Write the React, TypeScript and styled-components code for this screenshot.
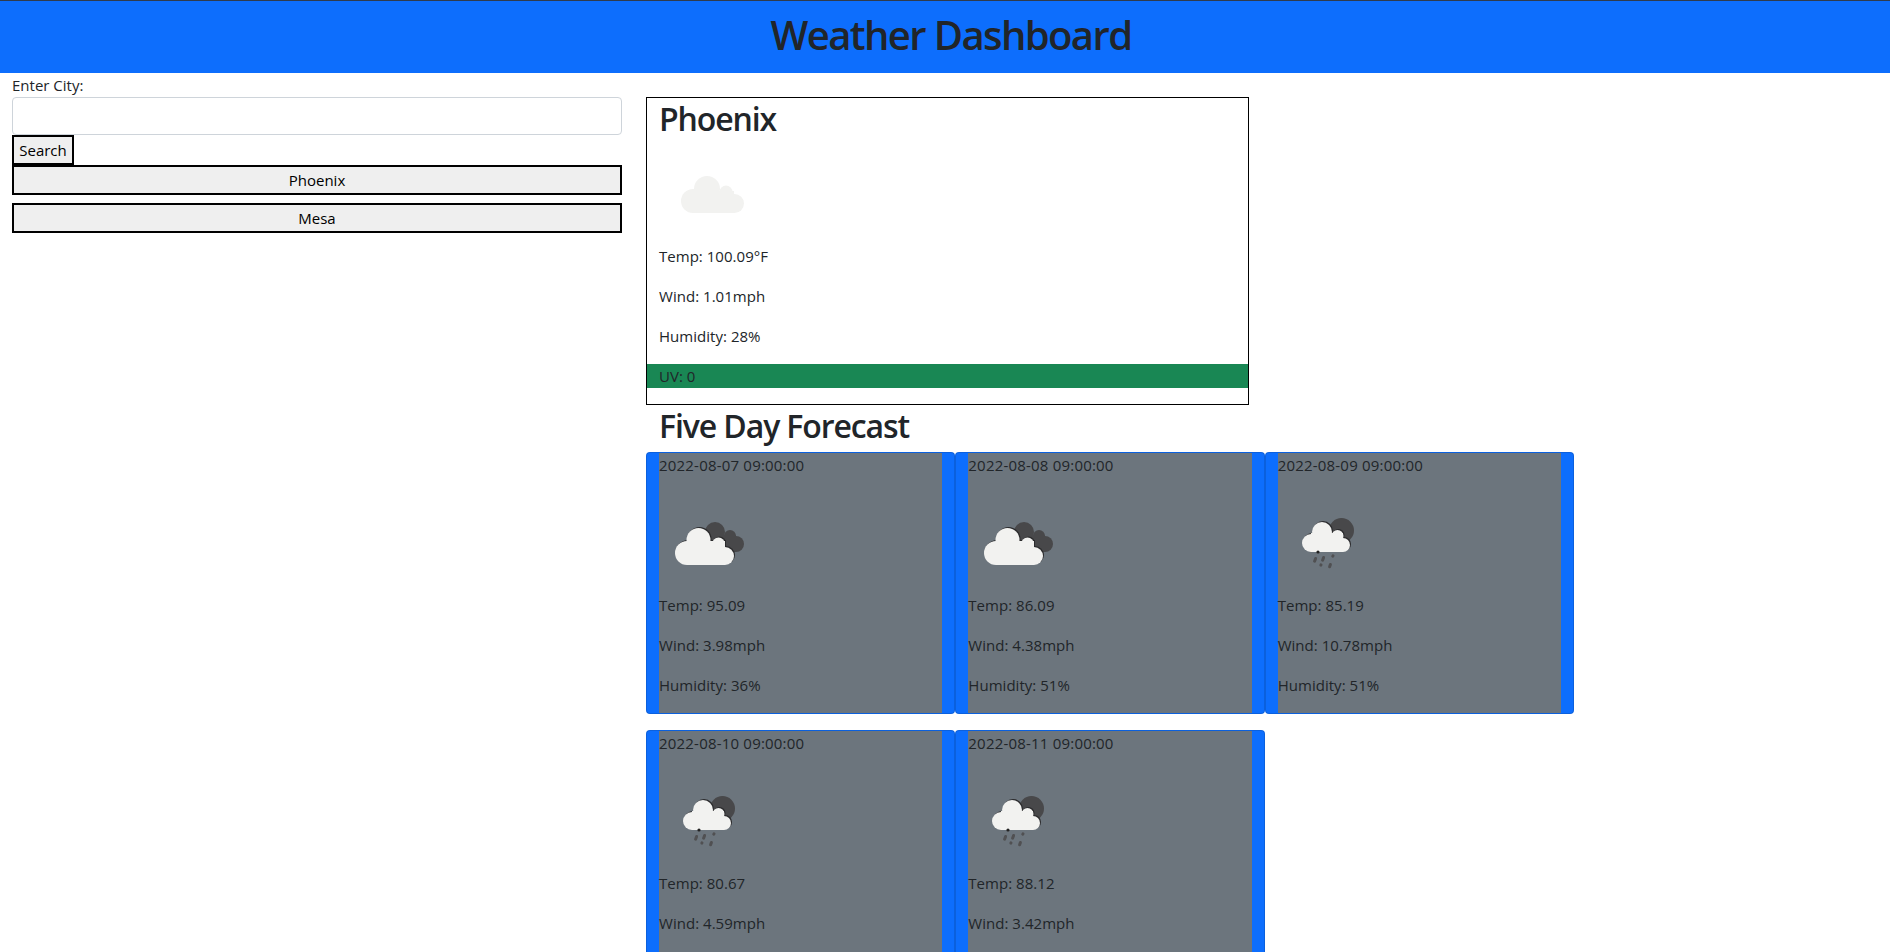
import React from 'react';
import styled, { createGlobalStyle } from 'styled-components';

const GlobalStyle = createGlobalStyle`
  html, body {
    margin: 0;
    height: 100%;
    overflow: hidden;
    background: #fff;
  }
  body {
    font-family: "Open Sans", "Noto Sans", sans-serif;
    font-size: 16px;
    line-height: 24px;
    color: #212529;
  }
  * {
    box-sizing: border-box;
  }
`;

const Page = styled.div`
  height: 952px;
  overflow: hidden;
`;

const Header = styled.header`
  height: 73px;
  background: #0d6efd;
  border-top: 1px solid #2f3b4c;
  padding: 0 0 5px 12px;
  display: flex;
  justify-content: center;
  align-items: center;
`;

const Title = styled.h1`
  margin: 0;
  font-size: 40px;
  line-height: 48px;
  font-weight: 600;
  letter-spacing: -1.6px;
`;

const Main = styled.main`
  display: flex;
  align-items: flex-start;
`;

const Sidebar = styled.aside`
  width: 634px;
  flex: none;
  padding: 0 12px;
`;

const Label = styled.label`
  display: block;
  font-size: 15px;
`;

const CityInput = styled.input`
  display: block;
  width: 100%;
  height: 38px;
  border: 1px solid #ced4da;
  border-radius: 4px;
  background: #fff;
`;

const PlainButton = styled.button<{ $wide?: boolean }>`
  display: block;
  width: ${({ $wide }) => ($wide ? '100%' : '62px')};
  height: 30px;
  padding: 1px 0;
  border: 2px solid #000;
  background: #efefef;
  color: #000;
  font-family: inherit;
  font-size: 15px;
  line-height: 24px;
  margin-bottom: ${({ $wide }) => ($wide ? '8px' : '0')};
`;

const Content = styled.section`
  width: 952px;
  flex: none;
  padding: 24px 12px 0;
`;

const CurrentBox = styled.div`
  width: 603px;
  height: 308px;
  border: 1px solid #000;
`;

const CityName = styled.h2`
  margin: 0;
  padding: 2px 12px 0;
  height: 38.4px;
  font-size: 32px;
  line-height: 38.4px;
  font-weight: 600;
  letter-spacing: -1.1px;
`;

const CurrentIcon = styled.svg`
  display: block;
  width: 100px;
  height: 100px;
  margin: 0 12px 8px;
`;

const CurrentLine = styled.p<{ $uv?: boolean }>`
  margin: 0 0 16px;
  padding: 0 12px;
  font-size: 15px;
  letter-spacing: ${({ $uv }) => ($uv ? '0' : '0.03px')};
  background: ${({ $uv }) => ($uv ? '#198754' : 'transparent')};
`;

const ForecastTitle = styled.h2`
  margin: 0;
  padding: 2px 13px 6.6px;
  font-size: 32px;
  line-height: 38.4px;
  font-weight: 600;
  letter-spacing: -1.1px;
`;

const ForecastGrid = styled.div`
  display: grid;
  grid-template-columns: repeat(3, 309.33px);
  row-gap: 16px;
`;

const Card = styled.article`
  height: 262px;
  background: #0d6efd;
  border: 1px solid rgba(0, 0, 0, 0.125);
  border-radius: 4px;
  padding: 0 12px;
`;

const CardBody = styled.div`
  height: 100%;
  background: #6c757d;
`;

const CardLine = styled.p<{ $date?: boolean }>`
  margin: 0 0 16px;
  font-size: 15px;
  letter-spacing: ${({ $date }) => ($date ? '0.2px' : '0.03px')};
`;

const CardIcon = styled.svg`
  display: block;
  width: 100px;
  height: 100px;
`;

const CloudIcon = () => (
  <CurrentIcon viewBox="0 0 100 100">
    <g fill="#f2f2f0">
      <circle cx="48" cy="53" r="13" />
      <circle cx="34" cy="65" r="12" />
      <circle cx="67" cy="56" r="6.5" />
      <circle cx="75.5" cy="67.5" r="9.5" />
      <rect x="34" y="55" width="41" height="22" />
    </g>
  </CurrentIcon>
);

const BrokenFront = () => (
  <>
    <circle cx="39.5" cy="47" r="12" />
    <circle cx="28" cy="60" r="12" />
    <circle cx="59.5" cy="51" r="6.5" />
    <circle cx="66" cy="63" r="9" />
    <rect x="28" y="48" width="38" height="24" />
  </>
);

const BrokenIcon = () => (
  <CardIcon viewBox="0 0 100 100">
    <g fill="#48484a">
      <circle cx="56" cy="39" r="10" />
      <circle cx="71" cy="43" r="6" />
      <circle cx="77" cy="51" r="8" />
      <rect x="56" y="42" width="21" height="17" />
    </g>
    <g fill="#2b2b2d" transform="translate(1 -1)">
      <BrokenFront />
    </g>
    <g fill="#f2f2f0">
      <BrokenFront />
    </g>
  </CardIcon>
);

const RainFront = () => (
  <>
    <circle cx="44" cy="39" r="10" />
    <circle cx="33" cy="50" r="9" />
    <circle cx="59.5" cy="43" r="6" />
    <circle cx="65" cy="52" r="7" />
    <rect x="33" y="40" width="32" height="19" />
  </>
);

const RainIcon = () => (
  <CardIcon viewBox="0 0 100 100">
    <circle cx="63.5" cy="37.5" r="12.5" fill="#48484a" />
    <g fill="#2b2b2d" transform="translate(1 -1)">
      <RainFront />
    </g>
    <g fill="#f2f2f0">
      <RainFront />
    </g>
    <circle cx="40" cy="59" r="1.6" fill="#222" />
    <g stroke="#505052" strokeWidth="3" strokeLinecap="round">
      <path d="M37.6 65.5 L36.6 68.2" />
      <path d="M45.6 64.5 L44.6 67.2" />
      <path d="M55 62.8 L54.8 63.2" />
      <path d="M43 71.8 L42.9 72.1" />
      <path d="M52.4 71.5 L51.6 73.8" />
    </g>
  </CardIcon>
);

const forecast = [
  { date: '2022-08-07 09:00:00', temp: '95.09', wind: '3.98', humidity: '36', rain: false },
  { date: '2022-08-08 09:00:00', temp: '86.09', wind: '4.38', humidity: '51', rain: false },
  { date: '2022-08-09 09:00:00', temp: '85.19', wind: '10.78', humidity: '51', rain: true },
  { date: '2022-08-10 09:00:00', temp: '80.67', wind: '4.59', humidity: '49', rain: true },
  { date: '2022-08-11 09:00:00', temp: '88.12', wind: '3.42', humidity: '38', rain: true },
];

const App: React.FC = () => (
  <Page>
    <GlobalStyle />
    <Header>
      <Title>Weather Dashboard</Title>
    </Header>
    <Main>
      <Sidebar>
        <Label htmlFor="city">Enter City:</Label>
        <CityInput id="city" type="text" />
        <PlainButton>Search</PlainButton>
        <PlainButton $wide>Phoenix</PlainButton>
        <PlainButton $wide>Mesa</PlainButton>
      </Sidebar>
      <Content>
        <CurrentBox>
          <CityName>Phoenix</CityName>
          <CloudIcon />
          <CurrentLine>Temp: 100.09°F</CurrentLine>
          <CurrentLine>Wind: 1.01mph</CurrentLine>
          <CurrentLine>Humidity: 28%</CurrentLine>
          <CurrentLine $uv>UV: 0</CurrentLine>
        </CurrentBox>
        <ForecastTitle>Five Day Forecast</ForecastTitle>
        <ForecastGrid>
          {forecast.map((day) => (
            <Card key={day.date}>
              <CardBody>
                <CardLine $date>{day.date}</CardLine>
                {day.rain ? <RainIcon /> : <BrokenIcon />}
                <CardLine>Temp: {day.temp}</CardLine>
                <CardLine>Wind: {day.wind}mph</CardLine>
                <CardLine>Humidity: {day.humidity}%</CardLine>
              </CardBody>
            </Card>
          ))}
        </ForecastGrid>
      </Content>
    </Main>
  </Page>
);

export default App;
